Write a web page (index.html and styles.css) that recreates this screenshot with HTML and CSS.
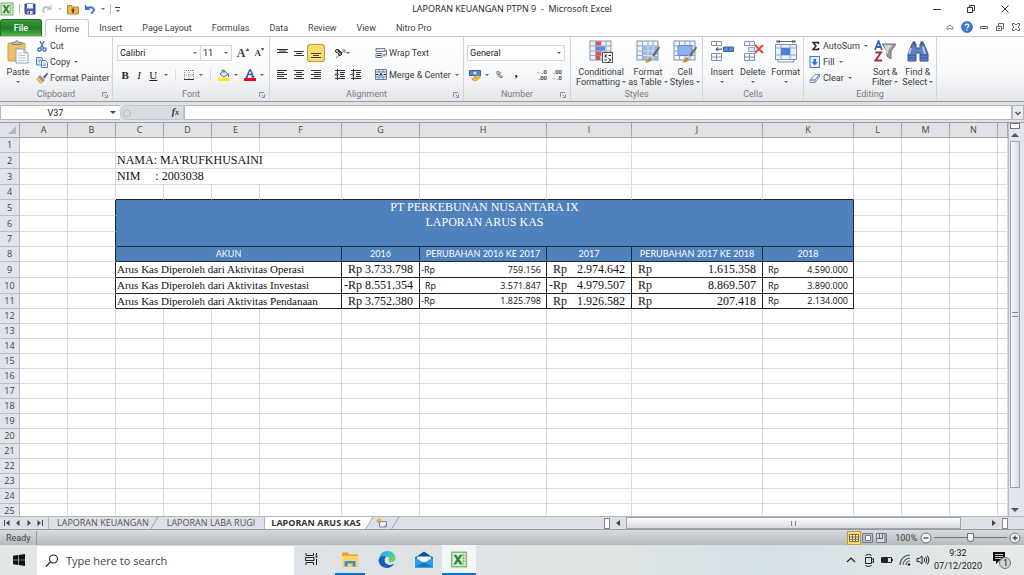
FILE: index.html
```html
<!DOCTYPE html>
<html lang="en">
<head>
<meta charset="utf-8">
<title>LAPORAN KEUANGAN PTPN 9 - Microsoft Excel</title>
<link rel="stylesheet" href="styles.css">
</head>
<body>
<svg class="defs" aria-hidden="true">
  <symbol id="xl" viewBox="0 0 14 14"><rect x="1" y="1" width="12" height="12" fill="#dff0da" stroke="#6fae68"/><path d="M9 3.500h3M9 6h3M9 8.500h3M10.500 2v10" stroke="#8cc57f" stroke-width=".8"/><path d="M2.500 3h2.400l1.300 2.400L7.600 3h2.300L7.400 7l2.700 4.200H7.700L6.100 8.700 4.600 11.200H2.200L4.900 7z" fill="#2f8a35"/></symbol>
  <symbol id="launch" viewBox="0 0 6 6"><path d="M.5 5V.5H5M2.500 2.500l2 2M5.500 2.500v3h-3" fill="none" stroke="#8d939b"/></symbol>
  <symbol id="grid" viewBox="0 0 24 22"><rect x="1" y="1" width="21" height="19" fill="#eef4fc" stroke="#7d93b5"/><path d="M1 6h21M1 11h21M1 15.500h21M6.500 1v19M12 1v19M17 1v19" stroke="#91a7c8"/></symbol>
  <symbol id="brush" viewBox="0 0 16 18"><path d="M15 1L8 10l2 2 6-9z" fill="#6b6e73"/><path d="M8 10l2 2-2 2-2-2z" fill="#c5c7ca"/><path d="M6 12l2 2c-1 3-4 3.500-7 3.500 2-1 2-4 5-5.500z" fill="#c98b3b"/></symbol>
</svg>

<header class="titlebar">
  <div class="quick">
    <svg class="i14" viewBox="0 0 14 14"><use href="#xl"/></svg>
    <i class="vsep"></i>
    <button aria-label="Save"><svg class="i12" viewBox="0 0 12 12"><path d="M1 1h10v10H2L1 10z" fill="#4b5fc0" stroke="#303f8c"/><path d="M3 1h6v4.500H3z" fill="#f3f6fd"/><path d="M3.500 8h5v3h-5z" fill="#dfe3ee"/><path d="M4.500 8.500h1.500V11H4.500z" fill="#303f8c"/></svg></button>
    <button aria-label="Redo"><svg class="i12" viewBox="0 0 12 12"><path d="M3.500 9.500C.5 6 3 2.500 9 5" fill="none" stroke="#b9bdc3" stroke-width="1.800"/><path d="M10.500 1.500v5.500H5.500z" fill="#b9bdc3"/></svg></button>
    <i class="caret pale"></i>
    <button aria-label="Open"><svg class="i12" viewBox="0 0 12 12"><path d="M.5 2.500h4l1 1.500h6v7H.5z" fill="#e9bb52" stroke="#b8862b"/><path d="M6 5l2.500 2.500H7V10H5V7.500H3.500z" fill="#7a4a28"/></svg></button>
    <button aria-label="Undo"><svg class="i12" viewBox="0 0 12 12"><path d="M7 10.500C12 7.500 10 2.500 3 5" fill="none" stroke="#3c73cf" stroke-width="2"/><path d="M1 1.500V7h5.500z" fill="#3c73cf"/></svg></button>
    <i class="caret"></i>
    <i class="vsep"></i>
    <button class="custom" aria-label="Customize toolbar"><i class="bar"></i><i class="caret"></i></button>
  </div>
  <h1 class="title">LAPORAN KEUANGAN PTPN 9&nbsp; -&nbsp; Microsoft Excel</h1>
  <div class="winbtns">
    <button aria-label="Minimize"><svg viewBox="0 0 10 10"><path d="M1 5.500h8" stroke="#333"/></svg></button>
    <button aria-label="Restore"><svg viewBox="0 0 10 10"><path d="M1.500 3.500h5v5h-5zM3.500 3V1.500h5v5H7" fill="none" stroke="#333"/></svg></button>
    <button aria-label="Close"><svg viewBox="0 0 10 10"><path d="M1.500 1.500l7 7M8.500 1.500l-7 7" stroke="#333"/></svg></button>
  </div>
</header>

<nav class="tabs">
  <button class="file">File</button>
  <button class="tab on">Home</button>
  <button class="tab">Insert</button>
  <button class="tab">Page Layout</button>
  <button class="tab">Formulas</button>
  <button class="tab">Data</button>
  <button class="tab">Review</button>
  <button class="tab">View</button>
  <button class="tab">Nitro Pro</button>
  <div class="tabtools">
    <button aria-label="Collapse ribbon"><svg class="i10" viewBox="0 0 10 10"><path d="M2 5.500L5 3l3 2.500V7H6L5 6 4 7H2z" fill="#fff" stroke="#777"/></svg></button>
    <button aria-label="Help"><svg class="i12" viewBox="0 0 12 12"><circle cx="6" cy="6" r="5.500" fill="#3f78cf" stroke="#2d5ca8" stroke-width=".7"/><path d="M4.200 4.600C4.300 2.500 7.800 2.600 7.800 4.600 7.800 5.900 6 6 6 7.300M6 8.300v1.300" fill="none" stroke="#fff" stroke-width="1.300"/></svg></button>
    <button aria-label="Minimize workbook"><svg class="i10" viewBox="0 0 10 10"><path d="M1.500 4.500h7v2h-7z" fill="none" stroke="#666"/></svg></button>
    <button aria-label="Restore workbook"><svg class="i10" viewBox="0 0 10 10"><path d="M1.500 4.500h5v4h-5zM3.500 4V1.500h5v5H7M3 6.500h2" fill="none" stroke="#666"/></svg></button>
    <button aria-label="Close workbook"><svg class="i10" viewBox="0 0 10 10"><path d="M1.500 1.500h2L5 3l1.500-1.500h2v2L7 5l1.500 1.500v2h-2L5 7 3.500 8.500h-2v-2L3 5 1.500 3.500z" fill="none" stroke="#666"/></svg></button>
  </div>
</nav>

<section class="ribbon">
  <div class="group clipboard">
    <div class="body">
      <button class="big"><svg class="ico" viewBox="0 0 24 24"><rect x="2" y="3" width="17" height="18" rx="1" fill="#efbf66" stroke="#cf9a42"/><path d="M6 4.500V2.500h3C9 0 12.500 0 12.500 2.500h3v2z" fill="#b9bdc3" stroke="#7f858d"/><path d="M10 9h8l4 4v10H10z" fill="#fff" stroke="#8aa0c4"/><path d="M18 9v4h4" fill="#dce6f6" stroke="#8aa0c4"/><path d="M12 13h4M12 15.500h8M12 18h8M12 20.500h8" stroke="#b2c3df"/></svg><span>Paste</span><i class="caret"></i></button>
      <div class="stack">
        <button class="sm"><svg class="i12" viewBox="0 0 12 12"><path d="M4 1l3.500 7M8 1L4.500 8" stroke="#4a6c9e" stroke-width="1.300"/><circle cx="3.500" cy="9.500" r="1.700" fill="none" stroke="#2f66b5" stroke-width="1.200"/><circle cx="8.500" cy="9.500" r="1.700" fill="none" stroke="#2f66b5" stroke-width="1.200"/></svg>Cut</button>
        <button class="sm"><svg class="i12" viewBox="0 0 12 12"><path d="M.5 1.500h5l1 1.500v6h-6z" fill="#dce9fb" stroke="#4c7cc4"/><path d="M5.500 4.500h4l2 2v5h-6z" fill="#fff" stroke="#4c7cc4"/><path d="M7 8h3M7 9.500h3M2 4h3M2 6h2" stroke="#4c7cc4" stroke-width=".7"/></svg>Copy<i class="caret"></i></button>
        <button class="sm"><svg class="i12" viewBox="0 0 12 12"><path d="M11.500.5L7 5l1.500 1.500L12 2z" fill="#55585f"/><path d="M4 3l5 5-2 2-5-5z" fill="#8f939a"/><path d="M2.500 5l4.500 5-2.500 1.500L.5 7z" fill="#f0c256" stroke="#c29a38" stroke-width=".6"/></svg>Format Painter</button>
      </div>
    </div>
    <div class="caption"><span>Clipboard</span><svg class="launch"><use href="#launch"/></svg></div>
  </div>

  <div class="group font">
    <div class="body rows">
      <div class="line">
        <div class="combo fname"><select aria-label="Font"><option>Calibri</option></select><i class="caret"></i></div><div class="combo fsize"><select aria-label="Font size"><option>11</option></select><i class="caret"></i></div>
        <button class="grow" aria-label="Grow font"><b>A</b><sup>▴</sup></button>
        <button class="shrink" aria-label="Shrink font"><b>A</b><sup>▾</sup></button>
      </div>
      <div class="line l2">
        <button class="ch"><b>B</b></button><button class="ch"><em>I</em></button><button class="ch"><u>U</u></button><i class="caret"></i><i class="rsep"></i>
        <button aria-label="Borders"><svg class="i12" viewBox="0 0 12 12"><path d="M1.500 1v9M6 1v9M10.500 1v9M1 1.500h10M1 6h10" fill="none" stroke="#8b9098" stroke-dasharray="1 1"/><path d="M1 10.500h10" stroke="#333"/></svg></button><i class="caret"></i><i class="rsep"></i>
        <button aria-label="Fill colour"><svg class="i12" viewBox="0 0 12 12"><path d="M2 5l4-3.500L10 5 6 8z" fill="#dfe6f1" stroke="#53677f"/><path d="M4 3V1h2v3" fill="none" stroke="#53677f" stroke-width=".8"/><path d="M9.500 4c2 .5 2 3 1.500 4.500C10 8 9 6 9.500 4z" fill="#3e7fd4"/><path d="M0 9h12v3H0z" fill="#fff100"/></svg></button><i class="caret"></i>
        <button aria-label="Font colour"><svg class="i12" viewBox="0 0 12 12"><path d="M2.500 8L5.700 1h.8l3 7M4 5.500h4.500M1.500 8h2.500M7.500 8h3" stroke="#32589a" stroke-width="1.400" fill="none"/><path d="M0 9h12v3H0z" fill="#e00b1c"/></svg></button><i class="caret"></i>
      </div>
    </div>
    <div class="caption"><span>Font</span><svg class="launch"><use href="#launch"/></svg></div>
  </div>

  <div class="group align">
    <div class="body cols">
      <div class="rows">
        <div class="line g6">
          <button aria-label="Top align"><svg class="i12" viewBox="0 0 12 12"><path d="M1 2.500h11M1 5.500h11M3 4h7" stroke="#333"/></svg></button>
          <button aria-label="Middle align"><svg class="i12" viewBox="0 0 12 12"><path d="M1 4.500h10M1 8.500h10M3 6.500h6" stroke="#333"/></svg></button>
          <button class="active" aria-label="Bottom align"><svg class="i12" viewBox="0 0 12 12"><path d="M1 6.500h10M1 10.500h10M3 8.500h6" stroke="#443711"/></svg></button>
        </div>
        <div class="line g6">
          <button aria-label="Align left"><svg class="i12" viewBox="0 0 12 12"><path d="M1 1.500h10M1 3.500h7M1 5.500h10M1 7.500h7M1 9.500h10" stroke="#333"/></svg></button>
          <button aria-label="Centre"><svg class="i12" viewBox="0 0 12 12"><path d="M1 1.500h10M3 3.500h6M1 5.500h10M3 7.500h6M1 9.500h10" stroke="#333"/></svg></button>
          <button aria-label="Align right"><svg class="i12" viewBox="0 0 12 12"><path d="M1 1.500h10M4 3.500h7M1 5.500h10M4 7.500h7M1 9.500h10" stroke="#333"/></svg></button>
        </div>
      </div>
      <i class="rsep"></i>
      <div class="rows">
        <div class="line"><button aria-label="Orientation"><svg class="i12" viewBox="0 0 12 12"><path d="M2 11l9-8M8 3h3v3" stroke="#777" fill="none"/><circle cx="3" cy="4" r="1.500" fill="none" stroke="#222"/><circle cx="6" cy="7" r="1.500" fill="none" stroke="#222"/><path d="M4 2l2 3M5 3l3 3" stroke="#222"/></svg></button><i class="caret"></i></div>
        <div class="line g4">
          <button aria-label="Decrease indent"><svg class="i12" viewBox="0 0 12 12"><path d="M1 1.500h10M6 3.500h5M6 5.500h4M6 7.500h5M1 9.500h10M3.500 0v11" stroke="#333"/><path d="M5 5.500H1M3 3.500l-2 2 2 2" fill="none" stroke="#2f6cc0"/></svg></button>
          <button aria-label="Increase indent"><svg class="i12" viewBox="0 0 12 12"><path d="M1 1.500h10M6 3.500h5M6 5.500h4M6 7.500h5M1 9.500h10M3.500 0v11" stroke="#333"/><path d="M0 5.500h4M2 3.500l2 2-2 2" fill="none" stroke="#2f6cc0"/></svg></button>
        </div>
      </div>
      <i class="rsep full"></i>
      <div class="rows wide">
        <div class="line"><button class="sm"><svg class="i12" viewBox="0 0 12 12"><path d="M1 1.500h9v3H1z" fill="#dfe6ef" stroke="#6e7f95"/><path d="M1 6.500h6v4H1z" fill="#fff" stroke="#6e7f95"/><path d="M2 8.500h4" stroke="#333"/><path d="M11.500 3v5H8.500M10 6.500L8.500 8 10 9.500" fill="none" stroke="#4b79b8"/></svg>Wrap Text</button></div>
        <div class="line"><button class="sm"><svg class="i12" viewBox="0 0 12 12"><path d="M.5.5h11v10H.5zM.5 3h11M.5 8h11M4 .5V3M8 .5V3M4 8v2.500M8 8v2.500" fill="#e5edf8" stroke="#5e7fae"/><path d="M1 5.500h2.500M11 5.500H8.500" stroke="#222"/><path d="M4.700 7L6 4l1.300 3" fill="none" stroke="#222"/></svg>Merge &amp; Center<i class="caret"></i></button></div>
      </div>
    </div>
    <div class="caption"><span>Alignment</span><svg class="launch"><use href="#launch"/></svg></div>
  </div>

  <div class="group number">
    <div class="body rows">
      <div class="line"><div class="combo nfmt"><select aria-label="Number format"><option>General</option></select><i class="caret"></i></div></div>
      <div class="line l3">
        <button aria-label="Accounting format"><svg class="i12" viewBox="0 0 12 12"><path d="M.5 1.500h11v5H.5z" fill="#5d87cf" stroke="#3a5f9f"/><circle cx="6" cy="4" r="1.500" fill="#d9e5f7"/><ellipse cx="8.500" cy="8" rx="3" ry="1.500" fill="#f2c84e" stroke="#b58a25" stroke-width=".6"/><ellipse cx="6" cy="10" rx="3" ry="1.500" fill="#f2c84e" stroke="#b58a25" stroke-width=".6"/></svg></button><i class="caret"></i>
        <button class="pct">%</button><button class="comma"><b>,</b></button><i class="rsep"></i>
        <button class="dec" aria-label="Increase decimal"><span><i>←</i>.0</span><span>.00</span></button>
        <button class="dec" aria-label="Decrease decimal"><span>.00</span><span><i>→</i>.0</span></button>
      </div>
    </div>
    <div class="caption"><span>Number</span><svg class="launch"><use href="#launch"/></svg></div>
  </div>

  <div class="group styles">
    <div class="body">
      <button class="big"><svg class="ico" viewBox="0 0 24 24"><use href="#grid" width="24" height="22"/><path d="M7 1.500h5v4H7zM7 11.500h5v4H7z" fill="#e4524f"/><path d="M7 6.500h9v4H7z" fill="#5a86d6"/><path d="M7 16h4v4H7z" fill="#e4524f"/><rect x="13.500" y="12.500" width="10" height="10" fill="#fff" stroke="#555"/><path d="M18 14.500l-2.500 1.500 2.500 1.500M19.500 15.500h2.500M15.500 20h2.500M19.500 18.500l2.500 1.500-2.500 1.500" fill="none" stroke="#222"/></svg><span>Conditional<br>Formatting <i class="caret"></i></span></button>
      <button class="big"><svg class="ico" viewBox="0 0 24 24"><use href="#grid" width="24" height="22"/><path d="M7 6.500h15V20H7z" fill="#7da5e6" opacity=".75"/><path d="M7 11h15M7 15.500h15M12 6v14M17 6v14" stroke="#dbe7f9"/><use href="#brush" x="8" y="5" width="16" height="18"/></svg><span>Format<br>as Table <i class="caret"></i></span></button>
      <button class="big"><svg class="ico" viewBox="0 0 24 24"><use href="#grid" width="24" height="22"/><path d="M5 5.500h14v10H5z" fill="#8db1ec" stroke="#6288c9"/><use href="#brush" x="8" y="5" width="16" height="18"/></svg><span>Cell<br>Styles <i class="caret"></i></span></button>
    </div>
    <div class="caption"><span>Styles</span></div>
  </div>

  <div class="group cells">
    <div class="body">
      <button class="big"><svg class="ico" viewBox="0 0 24 24"><path d="M1.500 1.500h10v4h-10zM6.500 1.500v4M1.500 13.500h10v7h-10zM6.500 13.500v7M1.500 17h10" fill="#f6f9fd" stroke="#8795ab"/><path d="M13.500 7h10v4.500h-10z" fill="#5c88d8" stroke="#3d64ab"/><path d="M18.500 7v4.500" stroke="#3d64ab"/><path d="M6 9.200h6M8 7.200l-2 2 2 2" fill="none" stroke="#333"/></svg><span>Insert</span><i class="caret"></i></button>
      <button class="big"><svg class="ico" viewBox="0 0 24 24"><path d="M3.500 1.500h10v4h-10zM8.500 1.500v4M3.500 13.500h10v7h-10zM8.500 13.500v7M3.500 17h10" fill="#f6f9fd" stroke="#8795ab"/><path d="M7.500 7.500h6v4h-6z" fill="#dce8fa" stroke="#8aa5d6"/><path d="M14 5l8 8M22 5l-8 8" stroke="#df4b38" stroke-width="2"/></svg><span>Delete</span><i class="caret"></i></button>
      <button class="big"><svg class="ico" viewBox="0 0 24 24"><path d="M3 1.500h18M3 0v3M21 0v3M6 0l-2 1.500L6 3M18 0l2 1.500L18 3" fill="none" stroke="#444" stroke-width=".8"/><rect x="1.500" y="4.500" width="21" height="15" fill="#edf3fc" stroke="#7d93b5"/><path d="M1.500 8h21M1.500 15h21M7 4.500v15M16 4.500v15" stroke="#91a7c8"/><path d="M7 8h9v7H7z" fill="#4f80d8"/><path d="M4 20v2h16v-2" fill="none" stroke="#7d93b5"/></svg><span>Format</span><i class="caret"></i></button>
    </div>
    <div class="caption"><span>Cells</span></div>
  </div>

  <div class="group editing">
    <div class="body">
      <div class="stack">
        <button class="sm"><svg class="i12" viewBox="0 0 12 12"><path d="M9.500 4V2.500H4L7 6 4 9.500h5.500V8" fill="none" stroke="#222" stroke-width="1.400"/></svg>AutoSum<i class="caret"></i></button>
        <button class="sm"><svg class="i12" viewBox="0 0 12 12"><rect x="1" y=".5" width="9.500" height="11" fill="#e4eefc" stroke="#5379b5"/><path d="M4.500 3h2.500v3h2L5.700 9.500 2.500 6h2z" fill="#3b6fd0"/></svg>Fill<i class="caret"></i></button>
        <button class="sm"><svg class="i12" viewBox="0 0 12 12"><path d="M1 8l5-5.500h4.500L6 8zM1 8h5v2.500H1zM6 8l4.500-5.500V5L6 10.500" fill="#eef3fa" stroke="#7488a8" stroke-width=".9"/></svg>Clear<i class="caret"></i></button>
      </div>
      <button class="big"><svg class="ico" viewBox="0 0 24 24"><path d="M9 4h14l-5 7v8l-4-3v-5z" fill="#9a9da2" stroke="#6d7075"/><path d="M11 5h8l-4 6v4" fill="#d5d7da"/><path d="M2 10L5.500 1 9 10M3.500 7h4" fill="none" stroke="#3562b4" stroke-width="1.800"/><path d="M2.500 12.500H8L2.500 20.500H9" fill="none" stroke="#a92c33" stroke-width="1.900"/></svg><span>Sort &amp;<br>Filter <i class="caret"></i></span></button>
      <button class="big"><svg class="ico" viewBox="0 0 24 24"><path d="M6 4h4v4h4V4h4l4 10v7h-8v-8h-4v8H2v-7z" fill="#5c82c2" stroke="#35568f"/><path d="M6.500 1.500h3v3h-3zM14.500 1.500h3v3h-3z" fill="#39598f"/><path d="M2.500 15h7M14.500 15h7M2.500 18h7M14.500 18h7" stroke="#33528a"/><path d="M5 8l-2 6M17 7l2 7" stroke="#c4d6f3" stroke-width="1.600"/></svg><span>Find &amp;<br>Select <i class="caret"></i></span></button>
    </div>
    <div class="caption"><span>Editing</span></div>
  </div>
</section>

<section class="formula">
  <div class="namebox"><input aria-label="Name box" value="V37"><i class="caret dark"></i></div>
  <div class="fx"><i class="knob"></i><button aria-label="Insert function"><em>f<small>x</small></em></button></div>
  <input class="fbar" aria-label="Formula bar">
  <button class="expand" aria-label="Expand formula bar"><svg viewBox="0 0 8 8"><path d="M1.500 3L4 5.500 6.500 3" fill="none" stroke="#555" stroke-width="1.500"/></svg></button>
</section>

<main class="work">
  <div class="sheet">
    <table class="grid">
      <colgroup><col class="w20"><col class="w48"><col class="w48"><col class="w48"><col class="w48"><col class="w48"><col class="w82"><col class="w78"><col class="w127"><col class="w85"><col class="w131"><col class="w91"><col class="w48"><col class="w48"><col class="w48"><col class="rest"></colgroup>
      <thead><tr><th class="corner"><svg viewBox="0 0 10 10"><path d="M9 1v8H1z" fill="#b3b8c0"/></svg></th><th>A</th><th>B</th><th>C</th><th>D</th><th>E</th><th>F</th><th>G</th><th>H</th><th>I</th><th>J</th><th>K</th><th>L</th><th>M</th><th>N</th><th></th></tr></thead>
      <tbody id="cells">
        <tr><th>1</th><td></td><td></td><td></td><td></td><td></td><td></td><td></td><td></td><td></td><td></td><td></td><td></td><td></td><td></td><td></td></tr>
        <tr class="tall"><th>2</th><td></td><td></td><td class="s" colspan="4">NAMA: MA'RUFKHUSAINI</td><td></td><td></td><td></td><td></td><td></td><td></td><td></td><td></td><td></td></tr>
        <tr class="tall"><th>3</th><td></td><td></td><td class="s pre" colspan="4">NIM     : 2003038</td><td></td><td></td><td></td><td></td><td></td><td></td><td></td><td></td><td></td></tr>
        <tr class="above"><th>4</th><td></td><td></td><td></td><td></td><td></td><td></td><td></td><td></td><td></td><td></td><td></td><td></td><td></td><td></td><td></td></tr>
        <tr class="tall"><th>5</th><td></td><td class="edge"></td><td class="banner" colspan="9" rowspan="3">PT PERKEBUNAN NUSANTARA IX<br>LAPORAN ARUS KAS</td><td></td><td></td><td></td><td></td></tr>
        <tr class="tall"><th>6</th><td></td><td class="edge"></td><td></td><td></td><td></td><td></td></tr>
        <tr><th>7</th><td></td><td class="edge"></td><td></td><td></td><td></td><td></td></tr>
        <tr><th>8</th><td></td><td class="edge"></td><td class="hd" colspan="4">AKUN</td><td class="hd">2016</td><td class="hd">PERUBAHAN 2016 KE 2017</td><td class="hd">2017</td><td class="hd">PERUBAHAN 2017 KE 2018</td><td class="hd">2018</td><td></td><td></td><td></td><td></td></tr>
        <tr class="tall"><th>9</th><td></td><td class="edge"></td><td class="s k name" colspan="4">Arus Kas Diperoleh dari Aktivitas Operasi</td><td class="s k"><p>Rp <b>3.733.798</b></p></td><td class="c k"><p class="neg">-Rp <b>759.156</b></p></td><td class="s k"><p>Rp <b>2.974.642</b></p></td><td class="s k"><p>Rp <b>1.615.358</b></p></td><td class="c k"><p>Rp <b>4.590.000</b></p></td><td></td><td></td><td></td><td></td></tr>
        <tr class="tall"><th>10</th><td></td><td class="edge"></td><td class="s k name" colspan="4">Arus Kas Diperoleh dari Aktivitas Investasi</td><td class="s k"><p class="neg">-Rp <b>8.551.354</b></p></td><td class="c k"><p>Rp <b>3.571.847</b></p></td><td class="s k"><p class="neg">-Rp <b>4.979.507</b></p></td><td class="s k"><p>Rp <b>8.869.507</b></p></td><td class="c k"><p>Rp <b>3.890.000</b></p></td><td></td><td></td><td></td><td></td></tr>
        <tr><th>11</th><td></td><td class="edge"></td><td class="s k name" colspan="4">Arus Kas Diperoleh dari Aktivitas Pendanaan</td><td class="s k"><p>Rp <b>3.752.380</b></p></td><td class="c k"><p class="neg">-Rp <b>1.825.798</b></p></td><td class="s k"><p>Rp <b>1.926.582</b></p></td><td class="s k"><p>Rp <b>207.418</b></p></td><td class="c k"><p>Rp <b>2.134.000</b></p></td><td></td><td></td><td></td><td></td></tr>
      </tbody>
    </table>
  </div>
  <div class="vscroll"><i class="split"></i><i class="up"></i><i class="thumb"><i></i></i><i class="down"></i></div>
</main>

<div class="sheetbar">
  <div class="nav">
    <button aria-label="First sheet"><svg viewBox="0 0 8 8"><path d="M1.500 1v6" stroke="#444"/><path d="M6.500 1v6L3 4z" fill="#444"/></svg></button>
    <button aria-label="Previous sheet"><svg viewBox="0 0 8 8"><path d="M5.500 1v6L2 4z" fill="#444"/></svg></button>
    <button aria-label="Next sheet"><svg viewBox="0 0 8 8"><path d="M2.500 1v6L6 4z" fill="#444"/></svg></button>
    <button aria-label="Last sheet"><svg viewBox="0 0 8 8"><path d="M1.500 1v6L5 4z" fill="#444"/><path d="M6.500 1v6" stroke="#444"/></svg></button>
  </div>
  <button class="stab">LAPORAN KEUANGAN</button><svg class="slash" viewBox="0 0 10 13"><path d="M1 13L9 0" stroke="#9aa0a8"/></svg>
  <button class="stab second">LAPORAN LABA RUGI</button>
  <button class="stab current">LAPORAN ARUS KAS</button><svg class="slash" viewBox="0 0 10 13"><path d="M0 0h9L1 13H0z" fill="#fff"/><path d="M1 13L9 0" stroke="#9aa0a8"/></svg>
  <button class="newtab" aria-label="Insert worksheet"><svg viewBox="0 0 12 10"><path d="M3.500 3.500h7v5.500h-7z" fill="#eef3fb" stroke="#7086b0"/><path d="M8 9l2.500-2.500" stroke="#7086b0"/><path d="M3 0v6M0 3h6M1 1l4 4M5 1L1 5" stroke="#e3a53a"/></svg></button><svg class="slash" viewBox="0 0 10 13"><path d="M1 13L9 0" stroke="#9aa0a8"/></svg>
  <div class="hscroll"><i class="hsplit"></i><i class="left"></i><div class="track"><i class="thumb"><i></i></i></div><i class="right"></i><i class="hsplit"></i></div>
</div>

<div class="status">
  <span class="ready">Ready</span>
  <div class="views">
    <button class="sel" aria-label="Normal view"><svg class="i12" viewBox="0 0 12 12"><path d="M1.500 2.500h9v7h-9zM1.500 5h9M1.500 7.300h9M4.500 2.500v7M7.500 2.500v7" fill="#fff" stroke="#7d6a2e"/></svg></button>
    <button aria-label="Page layout view"><svg class="i12" viewBox="0 0 12 12"><path d="M.5 1.500h10v9H.5z" fill="#bbc0c7" stroke="#777d86"/><path d="M3.500 3.500h5v5h-5z" fill="#fff" stroke="#777d86"/></svg></button>
    <button aria-label="Page break view"><svg class="i12" viewBox="0 0 12 12"><path d="M.5 1.500h10v9H.5z" fill="#d7dbe0" stroke="#777d86"/><path d="M3.500 1v5M6.500 1v5M9 1v9M1 6.500h6" stroke="#666c75"/></svg></button>
    <span class="pctz">100%</span>
    <button aria-label="Zoom out"><svg class="i12" viewBox="0 0 12 12"><circle cx="6" cy="6" r="5" fill="#f2f3f5" stroke="#6f757d"/><path d="M3.500 6h5" stroke="#444" stroke-width="1.300"/></svg></button>
    <input class="zoom" type="range" min="10" max="190" value="100" aria-label="Zoom">
    <button aria-label="Zoom in"><svg class="i12" viewBox="0 0 12 12"><circle cx="6" cy="6" r="5" fill="#f2f3f5" stroke="#6f757d"/><path d="M3.500 6h5M6 3.500v5" stroke="#444" stroke-width="1.300"/></svg></button>
  </div>
</div>

<footer class="taskbar">
  <button class="start" aria-label="Start"><svg viewBox="0 0 12 12"><path d="M0 1.700L5.300 1v4.700H0zM5.900.9L12 0v5.700H5.900zM0 6.300h5.300V11L0 10.300zM5.900 6.300H12V12l-6.100-.9z" fill="#111"/></svg></button>
  <label class="search"><svg viewBox="0 0 14 14"><circle cx="8.500" cy="5" r="4" fill="none" stroke="#222" stroke-width="1.100"/><path d="M5.500 8L1 12.500" stroke="#222" stroke-width="1.200"/></svg><input placeholder="Type here to search" aria-label="Search"></label>
  <button class="app" aria-label="Task view"><svg viewBox="0 0 16 14"><path d="M2 1v2.500h7.500V1M2 13v-2.500h7.500V13M1.500 5.500h8.500v3H1.500zM12.500 1v2M12.500 7v6" fill="none" stroke="#222"/><path d="M11.500 3.500h2v2h-2z" fill="#222"/></svg></button>
  <button class="app open" aria-label="File Explorer"><svg class="w18" viewBox="0 0 18 16"><path d="M1 1h6l1.500 2H17v12H1z" fill="#e5a82c"/><path d="M1 4.500h16V15H1z" fill="#fbd569"/><path d="M3.500 15V9.500h11V15h-3v-3h-5v3z" fill="#3f92d2"/></svg></button>
  <button class="app" aria-label="Edge"><svg class="w18" viewBox="0 0 18 18"><defs><linearGradient id="eg" x1="0" y1="0" x2="1" y2=".5"><stop offset="0" stop-color="#2a9fdc"/><stop offset=".6" stop-color="#36c3c4"/><stop offset="1" stop-color="#6bd554"/></linearGradient></defs><path d="M.5 8C1.500 3 5 0 9.500 0 14.500 0 18 3.500 18 7.500c0 3-2.500 4.500-5 4.500-1.500 0-2.500-.5-2-1.500C12 8 10.500 6 8 5.500 5 5 1.500 6 .5 8z" fill="url(#eg)"/><path d="M.2 9C1 5.500 6 4.500 8.500 6 6 7 5.500 11 8 13.500c2.500 2 6 1.500 8.500 0C15 16 12 18 9 18 4 18-.3 14 .2 9z" fill="#1460b4"/><path d="M6.500 8C5 11 7 16 13 15.500c1.500-.2 2.500-1 3.500-2-2.500 1.500-6 2-8.500 0C6 12 6 9.500 6.500 8z" fill="#0e4a94"/></svg></button>
  <button class="app" aria-label="Mail"><svg class="w18" viewBox="0 0 18 16"><path d="M0 6l9-6 9 6v4H0z" fill="#124f93"/><path d="M2 5h14v6H2z" fill="#f3f8fc"/><path d="M0 6l9 5.500L18 6v10H0z" fill="#2aa0e4"/><path d="M0 16l9-5.500L18 16z" fill="#1479c8"/></svg></button>
  <button class="app open hot" aria-label="Excel"><svg class="w18" viewBox="0 0 14 14"><use href="#xl"/></svg></button>
  <div class="tray">
    <svg viewBox="0 0 14 14"><path d="M3 9l4-4 4 4" fill="none" stroke="#222" stroke-width="1.200"/></svg>
    <svg viewBox="0 0 14 14"><path d="M3.500 4.500h6v6h-6zM9.500 6.500l2-1v4l-2-1M3.500 2.500c2-1.500 4-1.500 6 0M3.500 12.500c2 1.200 4 1.200 6 0" fill="none" stroke="#222"/></svg>
    <svg viewBox="0 0 14 14"><path d="M1.500 4.500h10v5h-10z" fill="none" stroke="#222"/><path d="M2 5h6v4H2zM12 6h1v2h-1z" fill="#222"/></svg>
    <svg viewBox="0 0 14 14"><path d="M2 12A10 10 0 0 1 12 2M5 12a7 7 0 0 1 7-7M8 12a4 4 0 0 1 4-4" fill="none" stroke="#555" stroke-width="1.200"/><circle cx="11" cy="11.500" r="1.300" fill="#222"/></svg>
    <svg viewBox="0 0 14 14"><path d="M1 5.500h2L6 3v8L3 8.500H1z" fill="none" stroke="#222"/><path d="M8 5q1.200 2 0 4M9.700 3.700q2.200 3.300 0 6.600M11.500 2.500q3 4.500 0 9" fill="none" stroke="#222"/></svg>
    <div class="clock"><span>9:32</span><span>07/12/2020</span></div>
    <div class="notes"><svg viewBox="0 0 20 18"><path d="M1 1h12v9H7l-3 3v-3H1z" fill="#111"/><path d="M3 3.500h8M3 5.500h8M3 7.500h6" stroke="#c8ccce" stroke-width=".9"/><circle cx="13" cy="12" r="5.500" fill="#cfd2d2" stroke="#777"/></svg><span>1</span></div>
  </div>
</footer>
<script src="grid.js"></script>
</body>
</html>
```

FILE: styles.css
```css
* { box-sizing: border-box; }
html, body { height: 100%; }
body { margin: 0; display: flex; flex-direction: column; overflow: hidden; background: #fff; color: #3c3c3c; font: 9px/10px Roboto, "Open Sans", sans-serif; }
button { border: 0; padding: 0; margin: 0; background: none; color: inherit; font: inherit; display: flex; align-items: center; white-space: nowrap; }
input, select { font: inherit; color: inherit; border: 0; padding: 0; margin: 0; background: none; min-width: 0; outline: 0; }
svg { display: block; flex: none; }
.defs { width: 0; height: 0; position: absolute; }
.i10 { width: 10px; height: 10px; }
.i12 { width: 12px; height: 12px; }
.i14 { width: 14px; height: 14px; }
.caret { flex: none; display: inline-block; width: 4px; height: 2px; border: 2px solid transparent; border-top-color: #666; border-bottom: 0; }
.caret.pale { border-top-color: #bbb; }
.caret.dark { width: 6px; height: 3px; border-width: 3px 3px 0; border-top-color: #444; }

.titlebar { flex: none; height: 18px; display: grid; grid-template-columns: 1fr auto 1fr; align-items: center; }
.quick { display: flex; align-items: center; gap: 5px; height: 17px; }
.vsep { width: 1px; height: 10px; background: #b5b8bd; margin-right: -1px; }
.custom { flex-direction: column; gap: 2px; }
.custom .bar { width: 5px; height: 1px; background: #444; }
.title { margin: 0; font: 9px/18px "Open Sans", sans-serif; color: #222; }
.winbtns { display: flex; justify-content: flex-end; gap: 24px; padding-right: 14px; }
.winbtns svg { width: 10px; height: 10px; }

.tabs { flex: none; height: 19px; display: flex; align-items: stretch; border-bottom: 1px solid #c6c9ce; color: #444; }
.tabs .file { width: 42px; justify-content: center; margin: 1px 3px 0 0; border-radius: 3px 3px 0 0; color: #fff; font-weight: 500; background: linear-gradient(#3c9a3c, #1f7d28 50%, #4eb548); border: 1px solid #1d7226; border-bottom: 0; }
.tab { padding: 0 9px; border: 1px solid transparent; border-bottom: 0; }
.tab.on { border-color: #c6c9ce; border-radius: 3px 3px 0 0; background: #fff; margin: 1px 0 -1px; }
.tabtools { margin-left: auto; display: flex; align-items: center; gap: 6px; padding-right: 3px; }

.ribbon { flex: none; height: 65px; display: flex; background: linear-gradient(#fff, #f8f9fa 55%, #e3e6ea); border-bottom: 1px solid #999ea6; overflow: hidden; }
.group { flex: none; display: flex; flex-direction: column; border-right: 1px solid #d3d6da; }
.clipboard { width: 113px; } .font { width: 157px; } .align { width: 194px; } .number { width: 107px; } .styles { width: 132px; } .cells { width: 101px; } .editing { width: 133px; }
.body { flex: 1; display: flex; padding: 3px 5px 0; min-height: 0; }
.caption { height: 14px; display: flex; justify-content: center; align-items: center; color: #777c83; position: relative; }
.launch { width: 6px; height: 6px; position: absolute; right: 4px; bottom: 3px; }
.big { flex-direction: column; align-self: flex-start; text-align: center; line-height: 10px; }
.big > span { margin-top: 3px; }
.big > .caret { margin-top: 4px; }
.big .caret { vertical-align: 2px; }
.ico { width: 24px; height: 24px; }
.stack { display: flex; flex-direction: column; gap: 4px; }
.sm { height: 12px; gap: 2px; }
.sm .caret { margin-left: 2px; }
.clipboard .body { padding-left: 6px; }
.clipboard .stack { margin-left: 6px; }
.rows { display: flex; flex-direction: column; gap: 5px; }
.body.rows { padding-top: 7px; }
.line { display: flex; align-items: center; height: 17px; }
.g6 { gap: 5px; } .g4 { gap: 4px; }
.combo { display: flex; align-items: center; height: 16px; border: 1px solid #d3d6db; background: #fff; padding: 0 3px 0 2px; color: #222; }
.combo select { appearance: none; flex: 1; }
.fname { width: 84px; margin-left: -1px; } .fsize { width: 32px; margin-left: -1px; } .nfmt { width: 99px; margin-left: -2px; }
.grow, .shrink { font: 12px/14px "Liberation Serif", serif; margin-left: 5px; }
.shrink { font-size: 9px; margin-left: 6px; }
.grow sup, .shrink sup { font-size: 6px; line-height: 6px; align-self: flex-start; }
.ch { font: 11px/14px "Liberation Serif", serif; width: 17px; justify-content: center; color: #222; }
.rsep { width: 1px; height: 12px; background: #d9dce0; margin: 0 7px; }
.l2 .caret, .l3 .caret { margin-left: 4px; }
.l2 .caret + button { margin-left: 6px; }
.cols { padding: 7px 5px 0 6px; }
.cols .rsep { align-self: flex-end; margin: 0 6px 4px; }
.cols .rsep.full { height: 38px; margin-left: 10px; margin-right: 3px; }
.active { background: linear-gradient(#fbd765, #ffe98f); outline: 2px solid #fbdc6e; box-shadow: 0 0 0 3px #c29b3e; border-radius: 1px; }
.pct { margin: 0 12px 0 7px; } .comma { font: 13px/8px "Liberation Serif", serif; color: #222; padding-bottom: 4px; }
.l3 .rsep { margin: 0 7px 0 11px; }
.dec { flex-direction: column; align-items: flex-end; width: 13px; margin-right: 4px; font: 700 6px/6px "Liberation Sans", sans-serif; }
.dec i { color: #2f6cc0; font-style: normal; }
.styles .body { gap: 2px; } .cells .body { gap: 6px; padding-left: 7px; } .editing .body { gap: 4px; }
.editing .stack { width: 59px; }

.formula { flex: none; height: 21px; display: flex; padding: 3px 0 2px; background: #dfe2e7; border-bottom: 1px solid #9a9fa7; }
.namebox { width: 120px; display: flex; align-items: center; background: #fff; border: 1px solid #b4b8be; border-right: 0; padding-right: 4px; color: #222; }
.namebox input { flex: 1; text-align: center; }
.fx { width: 64px; display: flex; align-items: center; justify-content: space-between; background: #d8dbe1; border: 1px solid #c1c4ca; border-radius: 8px 0 0 8px; padding: 0 4px 0 2px; }
.knob { width: 8px; height: 8px; border: 1px solid #b6bac1; border-radius: 50%; }
.fx em { font: italic 700 10px/12px "Liberation Serif", serif; color: #333; }
.fx small { font-size: 8px; }
.fbar { flex: 1; background: #fff; border: 1px solid #b4b8be; }
.expand { width: 12px; justify-content: center; border: 1px solid #b4b8be; background: #e8eaee; }
.expand svg { width: 8px; height: 8px; }

.work { flex: 1; min-height: 0; display: flex; }
.sheet { flex: 1; min-width: 0; overflow: hidden; }
.grid { width: 100%; table-layout: fixed; border-collapse: separate; border-spacing: 0; }
.w20 { width: 20px; } .w48 { width: 48px; } .w82 { width: 82px; } .w78 { width: 78px; } .w127 { width: 127px; } .w85 { width: 85px; } .w131 { width: 131px; } .w91 { width: 91px; }
.grid th, .grid td { height: 15px; padding: 0; line-height: 14px; white-space: nowrap; border-right: 1px solid #d9dbde; border-bottom: 1px solid #d9dbde; }
.grid .tall > * { height: 16px; line-height: 15px; }
.grid th { font-family: "Open Sans", sans-serif; font-size: 9px; font-weight: 400; color: #444; background: #e0e3e9; border-color: #b8bcc3; }
.grid thead th { background: #dfe2e6; border-color: #a4a8af; }
.corner svg { width: 10px; height: 10px; margin-left: 7px; }
.grid .s { font-family: "Liberation Serif", serif; font-size: 12px; color: #111; padding-left: 1px; }
.grid .name { font-size: 11px; }
.grid .c { font-family: "Open Sans", sans-serif; font-size: 9px; color: #111; }
.grid .pre { white-space: pre; }
.grid .above td:nth-child(n+4):nth-child(-n+12) { border-bottom-color: #222; }
.grid .edge { border-right-color: #222; }
.grid .banner { background: #4f81bd; color: #fff; font: 12px/15px "Liberation Serif", serif; text-align: center; vertical-align: top; border-color: #1b2a3d; }
.grid .hd { background: #4f81bd; color: #fff; font: 9px/14px Lato, sans-serif; text-align: center; border-color: #1b2a3d; }
.grid .k { border-color: #222; }
.grid p { margin: 0; display: flex; justify-content: space-between; padding: 0 6px 0 5px; }
.grid .c p { padding-right: 5px; }
.grid p.neg { padding-left: 1px; }
.grid p b { font-weight: 400; }

.vscroll { flex: none; width: 16px; display: flex; flex-direction: column; align-items: center; padding: 0 3px 0 0; background: #e3e5ec; border-left: 1px solid #b8bcc3; }
.split { width: 10px; height: 6px; background: #fff; border: 1px solid #777; }
.up, .down { width: 8px; height: 4px; border: 4px solid transparent; }
.up { border-width: 0 4px 4px; border-bottom-color: #555; margin: 4px 0; }
.down { border-width: 4px 4px 0; border-top-color: #555; margin: 20px 0 4px; }
.vscroll .thumb { flex: 1; width: 10px; background: linear-gradient(90deg, #f6f7fa, #d9dce6); border: 1px solid #9da2ad; display: flex; align-items: center; justify-content: center; }
.vscroll .thumb i { width: 6px; height: 5px; border: solid #888; border-width: 1px 0; }

.sheetbar { flex: none; height: 13px; display: flex; align-items: stretch; background: #dde0e8; border-top: 1px solid #b0b4bb; color: #555; font-family: "Open Sans", sans-serif; }
.nav { display: flex; gap: 3px; padding: 0 4px 0 3px; width: 48px; }
.nav svg { width: 8px; height: 8px; }
.stab { padding: 0 0 0 8px; border-left: 1px solid #b0b4bb; line-height: 12px; }
.stab.second { border-left: 0; }
.stab.current { padding: 0 3px 0 6px; margin-left: 9px; background: #fff; font-weight: 700; color: #333; }
.slash { width: 10px; height: 13px; }
.newtab svg { width: 12px; height: 10px; margin: 0 2px; }
.hscroll { margin-left: auto; width: 41%; display: flex; align-items: center; gap: 6px; padding-right: 16px; }
.hsplit { flex: none; width: 6px; height: 11px; background: #fff; border: 1px solid #888; }
.left, .right { flex: none; width: 4px; height: 6px; border: 3px solid transparent; }
.left { border-width: 3px 4px 3px 0; border-right-color: #444; }
.right { border-width: 3px 0 3px 4px; border-left-color: #444; }
.track { flex: 1; height: 12px; }
.track .thumb { display: flex; align-items: center; justify-content: center; width: 93%; height: 12px; background: linear-gradient(#fafbfc, #d9dce2); border: 1px solid #9da2ad; }
.track .thumb i { width: 5px; height: 5px; border: solid #888; border-width: 0 1px; }

.status { flex: none; height: 16px; display: flex; align-items: center; justify-content: space-between; background: linear-gradient(#d7dade, #b6babf); border-top: 1px solid #989da5; color: #444; }
.ready { width: 37px; padding-left: 6px; border-right: 1px solid #999; line-height: 14px; }
.views { display: flex; align-items: center; gap: 2px; padding-right: 3px; }
.views .sel { background: #fbdc6e; outline: 1px solid #c29b3e; }
.pctz { margin: 0 1px 0 5px; }
.zoom { appearance: none; width: 73px; height: 12px; background: linear-gradient(#777, #777) center/100% 1px no-repeat; }
.zoom::-webkit-slider-thumb { appearance: none; width: 7px; height: 9px; background: #f4f5f6; border: 1px solid #6f757d; border-radius: 1px 1px 4px 4px; }

.taskbar { flex: none; height: 30px; display: flex; background: linear-gradient(90deg, #e2e8e4, #dee2e7 30%, #dfe4e3 60%, #d5e0e6 75%, #e6e9e6); color: #222; }
.start { width: 37px; justify-content: center; }
.start svg { width: 12px; height: 12px; }
.search { width: 257px; display: flex; align-items: center; gap: 7px; padding-left: 8px; background: #fff; border-top: 1px solid #d6d9db; font: 11px/14px "Open Sans", sans-serif; }
.search svg { width: 14px; height: 14px; }
.search input { flex: 1; }
.search input::placeholder { color: #444; opacity: 1; }
.app { width: 30px; justify-content: center; margin-left: 7px; border-bottom: 2px solid transparent; }
.search + .app { margin-left: 3px; margin-right: 1px; }
.app svg { width: 16px; height: 14px; }
.app .w18 { width: 18px; height: 17px; }
.app.open { border-bottom-color: #0f72cc; }
.app.hot { width: 34px; background: #f3f6f6; margin-left: 3px; }
.tray { margin-left: auto; display: flex; align-items: center; gap: 4px; padding-right: 12px; }
.tray svg { width: 14px; height: 14px; }
.clock { width: 48px; text-align: center; line-height: 13px; }
.clock span { display: block; }
.notes { position: relative; margin-left: 6px; }
.tray .notes svg { width: 20px; height: 18px; }
.notes span { position: absolute; left: 11px; top: 7px; }
```

FILE: grid.js
```js
const body = document.getElementById("cells");
for (let n = 12; n <= 25; n++) {
  const row = body.insertRow();
  const head = document.createElement("th");
  head.textContent = n;
  row.append(head);
  for (let c = 0; c < 15; c++) row.insertCell();
}
```
